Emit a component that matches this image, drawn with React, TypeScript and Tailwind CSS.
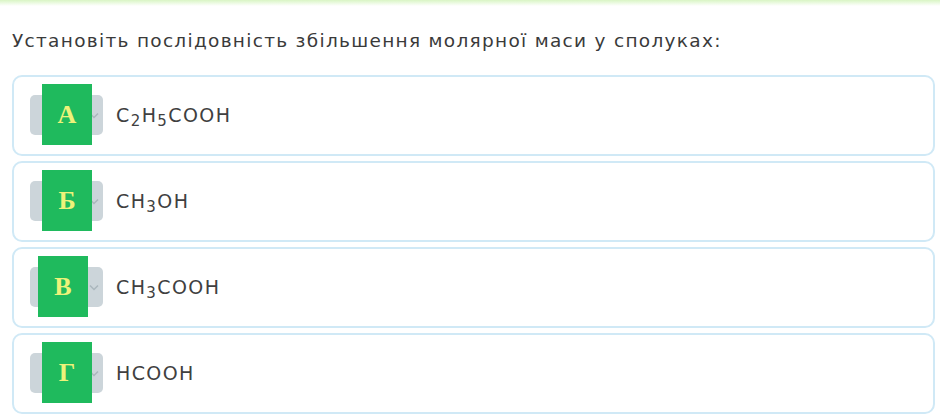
import React from "react";

type Row = { letter: string; formula: React.ReactNode; shift?: string };

const sub = (n: string) => <sub className="text-[15px] relative top-[4px] align-baseline">{n}</sub>;

const rows: Row[] = [
  { letter: "А", formula: <>C{sub("2")}H{sub("5")}COOH</> },
  { letter: "Б", formula: <>CH{sub("3")}OH</> },
  { letter: "В", formula: <>CH{sub("3")}COOH</>, shift: "ml-[-4px]" },
  { letter: "Г", formula: <>HCOOH</> },
];

const App: React.FC = () => {
  return (
    <div className="w-[940px] h-[419px] bg-white overflow-hidden" style={{ fontFamily: "'DejaVu Sans', sans-serif" }}>
      {/* top accent strip */}
      <div className="h-[6px] bg-gradient-to-b from-[#d9f5c4] to-white" />

      <h2 className="px-3 mt-[21px] text-[18.5px] text-[#3a3a3a] tracking-[1.3px]">
        Установіть послідовність збільшення молярної маси у сполуках:
      </h2>

      <div className="mt-[20px] pl-3 pr-[5px] flex flex-col gap-[5px]">
        {rows.map((r) => (
          <div
            key={r.letter}
            className="h-[81px] rounded-[10px] border-2 border-[#d0e9f6] flex items-center pl-[16px]"
          >
            {/* answer dropdown */}
            <div className="relative w-[73px] h-[40px] rounded-[5px] bg-[#ccd5da] flex items-center justify-end pr-[3px]">
              <svg width="12" height="12" viewBox="0 0 12 12" className="text-[#aab6bd]">
                <path d="M2 4.5 6 8.5 10 4.5" fill="none" stroke="currentColor" strokeWidth="1.5" />
              </svg>
              <div
                className={`absolute left-[12px] top-[-11px] w-[50px] h-[61px] bg-[#1fba5d] flex items-center justify-center ${r.shift ?? ""}`}
              >
                <span
                  className="text-[26px] font-bold text-[#eef27a] leading-none"
                  style={{ fontFamily: "'Liberation Serif', serif" }}
                >
                  {r.letter}
                </span>
              </div>
            </div>
            <span className="ml-[13px] text-[19px] text-[#404040] tracking-[1.4px]">{r.formula}</span>
          </div>
        ))}
      </div>
    </div>
  );
};

export default App;
